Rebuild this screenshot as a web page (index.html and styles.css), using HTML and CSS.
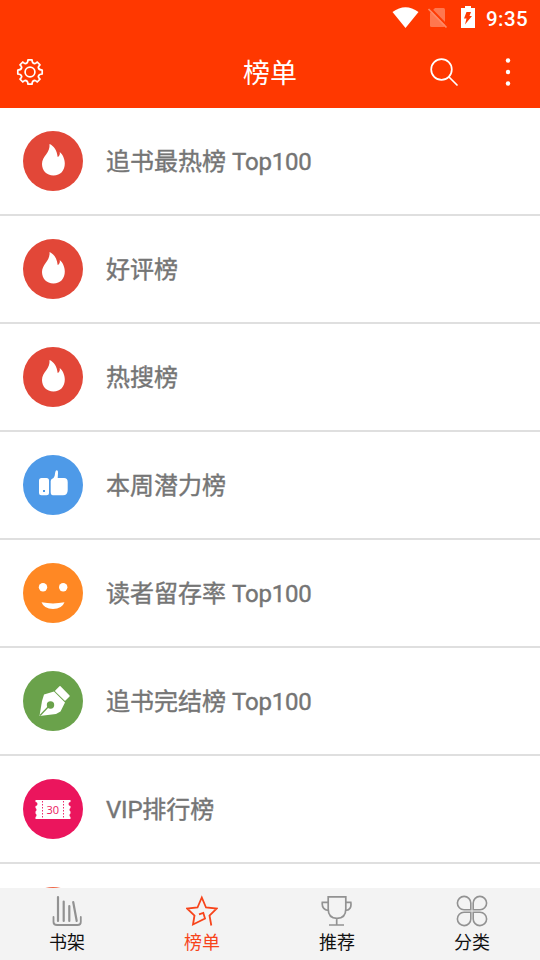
FILE: index.html
```html
<!DOCTYPE html>
<html lang="zh-CN">
<head>
<meta charset="utf-8">
<title>榜单</title>
<link rel="stylesheet" href="styles.css">
</head>
<body>
<svg class="defs" width="0" height="0">
  <symbol id="flame" viewBox="0 0 60 60"><path fill="#fff" d="M26.500 13C31 15 34 19.500 34.700 26C36.500 25.500 37.200 23 36.700 21C39.500 23 41.800 28 41.800 32.500C41.800 39.500 37.500 44.500 30.500 44.500C23.500 44.500 19 39.500 19 33C19 25 27.500 22 26.500 13Z"/></symbol>
</svg>
<div class="app">
  <header class="top">
    <div class="status">
      <svg class="status-icons" width="84" height="24" viewBox="392 5 84 24">
        <path fill="#fff" d="M392.500 12Q405.500 2.500 418.500 12L405.500 28Z"/>
        <path fill="#ff774f" d="M435 8H443.500Q445 8 445 9.500V25.500Q445 27 443.500 27H431.500Q430 27 430 25.500V13Z"/>
        <path stroke="#ff3a03" stroke-width="2" d="M430 8L448 26.500"/>
        <path stroke="#ff8967" stroke-width="1.700" d="M428.500 9L446.500 27.500"/>
        <path fill="#fff" d="M461 8H465V6H471V8H475V28H461Z"/>
        <path fill="#ff3a03" d="M466.500 12H471L469.500 16H472L465 24.500L466.500 18.500H464Z"/>
      </svg>
      <span class="time">9:35</span>
    </div>
    <div class="bar">
      <svg class="gear" width="28" height="28" viewBox="-14 -14 28 28" fill="none" stroke="#fff" stroke-width="1.700" stroke-linejoin="round">
        <path d="M-2-12.200H2Q2-8.800 4.500-8.300Q5.500-8.200 7.200-10L10-7.200Q8.200-5.500 8.300-4.500Q8.800-2 12.200-2V2Q8.800 2 8.300 4.500Q8.200 5.500 10 7.200L7.200 10Q5.500 8.200 4.500 8.300Q2 8.800 2 12.200H-2Q-2 8.800-4.500 8.300Q-5.500 8.200-7.200 10L-10 7.200Q-8.200 5.500-8.300 4.500Q-8.800 2-12.200 2V-2Q-8.800-2-8.300-4.500Q-8.200-5.500-10-7.200L-7.200-10Q-5.500-8.200-4.500-8.300Q-2-8.800-2-12.200Z"/>
        <circle r="4.900"/>
      </svg>
      <h1>榜单</h1>
      <div class="actions">
        <svg width="30" height="30" viewBox="429 57 30 30" fill="none" stroke="#fff" stroke-width="1.700" stroke-linecap="round"><circle cx="441.500" cy="69.500" r="10.300"/><path d="M449 77L457 85"/></svg>
        <svg width="6" height="30" viewBox="505 57 6 30" fill="#fff"><circle cx="508" cy="60.500" r="2.200"/><circle cx="508" cy="72" r="2.200"/><circle cx="508" cy="83.500" r="2.200"/></svg>
      </div>
    </div>
  </header>
  <main class="list">
    <div class="row"><span class="badge red"><svg viewBox="0 0 60 60"><use href="#flame"/></svg></span><span class="label">追书最热榜 <span class="latin">Top100</span></span></div>
    <div class="row"><span class="badge red"><svg viewBox="0 0 60 60"><use href="#flame"/></svg></span><span class="label">好评榜</span></div>
    <div class="row"><span class="badge red"><svg viewBox="0 0 60 60"><use href="#flame"/></svg></span><span class="label">热搜榜</span></div>
    <div class="row"><span class="badge blue"><svg viewBox="0 0 60 60" fill="#fff"><rect x="16" y="23" width="10" height="17.300" rx="2.500"/><path d="M30.500 23Q32 21 32.300 17Q32.800 14.800 34 15.200Q35.200 15.500 35 18L34.700 23H41Q44.700 23 44.700 27V35Q44.700 40.300 40 40.300H30Q27.700 40.300 27.700 37V26Q27.700 24 30.500 23Z"/><rect x="20" y="35" width="2" height="2" fill="#4e9ae8"/></svg></span><span class="label">本周潜力榜</span></div>
    <div class="row"><span class="badge orange"><svg viewBox="0 0 60 60" fill="#fff"><circle cx="20" cy="24.200" r="4.200"/><circle cx="40.200" cy="24.200" r="4.200"/><path d="M18.500 39.300Q30 41.500 41.500 39.300Q39 46 30 46Q21 46 18.500 39.300Z"/></svg></span><span class="label">读者留存率 <span class="latin">Top100</span></span></div>
    <div class="row"><span class="badge green"><svg viewBox="0 0 60 60"><path fill="#fff" d="M16.500 45L19 30L21 23.500L31 20.500L42 31.500L37.500 40.500L33 43Z"/><path fill="#fff" stroke="#fff" stroke-width="1.500" stroke-linejoin="round" d="M37 15.800L46 25L42 29L32.800 20Z"/><circle cx="27.500" cy="34" r="3.700" fill="#6aa24b"/><path stroke="#6aa24b" stroke-width="1.300" d="M17 44.500L27 34"/></svg></span><span class="label">追书完结榜 <span class="latin">Top100</span></span></div>
    <div class="row"><span class="badge pink"><svg viewBox="0 0 60 60"><path fill="#fff" d="M12.500 21H47.500V23A2 2 0 0 0 47.500 27V29A2 2 0 0 0 47.500 32.500V34.500A2 2 0 0 0 47.500 38V40H12.500V38A2 2 0 0 0 12.500 34.500V32.500A2 2 0 0 0 12.500 29V27A2 2 0 0 0 12.500 23Z"/><path stroke="#eb155d" stroke-width=".9" stroke-dasharray="1.500 1.500" d="M19.500 22V40M40.500 22V40"/><text x="29.700" y="35" text-anchor="middle" class="ticket">30</text></svg></span><span class="label"><span class="latin">VIP</span>排行榜</span></div>
    <div class="row"><span class="badge coral"></span></div>
  </main>
  <nav class="tabs">
    <div class="tab"><svg viewBox="51.500 895 32 32" stroke-linecap="round"><path stroke-width="2.200" d="M58.500 897V921M64.200 901.500V921M69.800 906V921M73.700 902L77.200 921"/><path stroke-width="1.800" d="M54 917V922Q54 925 57.500 925H78Q81.300 925 81.300 922V917"/></svg><span>书架</span></div>
    <div class="tab active"><svg viewBox="186.500 895 32 32" stroke-width="1.800"><path d="M211.800 925.500L210 915.500L217.300 908.500L206.500 907.500L202.300 897.500L198 907.500L187.500 908.500L195 915.500L193.500 924.500L205.500 918.500L203.800 912.800L199.500 914.300"/></svg><span>榜单</span></div>
    <div class="tab"><svg viewBox="321.500 895 32 32" stroke-width="1.700"><path d="M328.700 896.800H346.300V909Q346.300 918.300 337.500 918.300Q328.700 918.300 328.700 909ZM328.700 902.300H322.800Q322 909.500 328.700 910.500M346.300 902.300H351.300Q352.500 909.500 346.300 910.500M337.200 918.500V925M329.500 925H344.500"/></svg><span>推荐</span></div>
    <div class="tab"><svg viewBox="456.500 895 32 32" stroke-width="1.600"><path d="M471.300 909.800H464.500A6.700 6.700 0 1 1 471.300 903.100ZM473.700 909.800H480.500A6.700 6.700 0 1 0 473.700 903.100ZM471.300 912.200H464.500A6.700 6.700 0 1 0 471.300 918.900ZM473.700 912.200H480.500A6.700 6.700 0 1 1 473.700 918.900Z"/></svg><span>分类</span></div>
  </nav>
</div>
</body>
</html>
```

FILE: styles.css
```css
* { box-sizing: border-box; }
body { margin: 0; font-family: Roboto, "Noto Sans CJK SC", sans-serif; }
svg { display: block; }
.defs { height: 0; }
.app { display: flex; flex-direction: column; width: 540px; height: 960px; overflow: hidden; background: #fff; }
.top { height: 108px; flex: none; background: #ff3800; color: #fff; }
.status { height: 36px; display: flex; justify-content: flex-end; padding: 5px 12px 0 0; }
.time { margin-left: 10px; font-size: 20.5px; font-weight: 500; line-height: 28px; letter-spacing: 0.4px; }
.bar { height: 72px; display: grid; grid-template-columns: 1fr auto 1fr; align-items: center; padding: 0 29px 0 16px; }
.bar h1 { margin: 0; padding: 3px 0 0 13px; font-size: 27px; font-weight: 400; line-height: 40px; }
.actions { display: flex; gap: 46px; justify-content: flex-end; }
.list { flex: 1; min-height: 0; overflow: hidden; }
.row { height: 108px; display: flex; align-items: center; gap: 23px; padding-left: 23px; border-bottom: 2px solid #dfdfdf; }
.badge { width: 60px; height: 60px; flex: none; border-radius: 50%; }
.label { padding-top: 2px; font-size: 24px; line-height: 36px; color: #757575; -webkit-text-stroke: 0.4px #757575; }
.latin { letter-spacing: -0.2px; }
.red { background: #e24738; }
.blue { background: #4e9ae8; }
.orange { background: #ff8824; }
.green { background: #6aa24b; }
.pink { background: #eb155d; }
.coral { background: #ef6747; }
.ticket { font: 11px "Open Sans", sans-serif; fill: #eb155d; }
.tabs { height: 72px; flex: none; display: grid; grid-template-columns: repeat(4, 1fr); background: #f3f3f3; }
.tab { display: flex; flex-direction: column; align-items: center; gap: 2px; padding: 7px 1px 0 0; font-size: 18px; line-height: 28px; color: #111; }
.tab svg { width: 32px; height: 32px; fill: none; stroke: #929292; }
.tab.active { color: #f7441b; }
.tab.active svg { stroke: #f7441b; }
```
